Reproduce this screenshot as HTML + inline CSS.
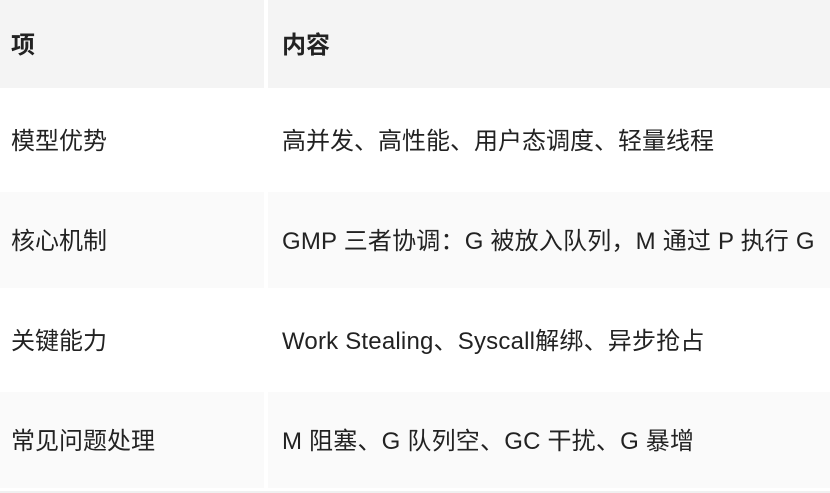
<!DOCTYPE html>
<html><head><meta charset="utf-8"><style>
html,body{margin:0;padding:0;background:#fff;width:830px;height:493px;overflow:hidden}
.c{position:absolute;box-sizing:border-box;font-family:"Liberation Sans","Noto Sans CJK SC",sans-serif;font-size:24px;color:#222;display:flex;align-items:center;white-space:nowrap;padding-bottom:3px}
.h{background:#f4f4f4;font-weight:bold}
.g{background:#fafafa}
.l{letter-spacing:0.2px}
</style></head><body>
<div class="c h" style="left:0;top:0;width:264px;height:88px;padding-left:11px">项</div>
<div class="c h" style="left:268px;top:0;width:562px;height:88px;padding-left:14px">内容</div>
<div class="c" style="left:0;top:92px;width:264px;height:96px;padding-left:11px">模型优势</div>
<div class="c" style="left:268px;top:92px;width:562px;height:96px;padding-left:14px">高并发、高性能、用户态调度、轻量线程</div>
<div class="c g" style="left:0;top:192px;width:264px;height:96px;padding-left:11px">核心机制</div>
<div class="c g" style="left:268px;top:192px;width:562px;height:96px;padding-left:14px"><span class="l">GMP 三者协调：G 被放入队列，M 通过 P 执行 G</span></div>
<div class="c" style="left:0;top:292px;width:264px;height:96px;padding-left:11px">关键能力</div>
<div class="c" style="left:268px;top:292px;width:562px;height:96px;padding-left:14px"><span class="l">Work Stealing、Syscall解绑、异步抢占</span></div>
<div class="c g" style="left:0;top:392px;width:264px;height:96px;padding-left:11px">常见问题处理</div>
<div class="c g" style="left:268px;top:392px;width:562px;height:96px;padding-left:14px"><span class="l">M 阻塞、G 队列空、GC 干扰、G 暴增</span></div>
<div style="position:absolute;left:0;top:491px;width:830px;height:2px;background:#f0f0f0"></div>
</body></html>
